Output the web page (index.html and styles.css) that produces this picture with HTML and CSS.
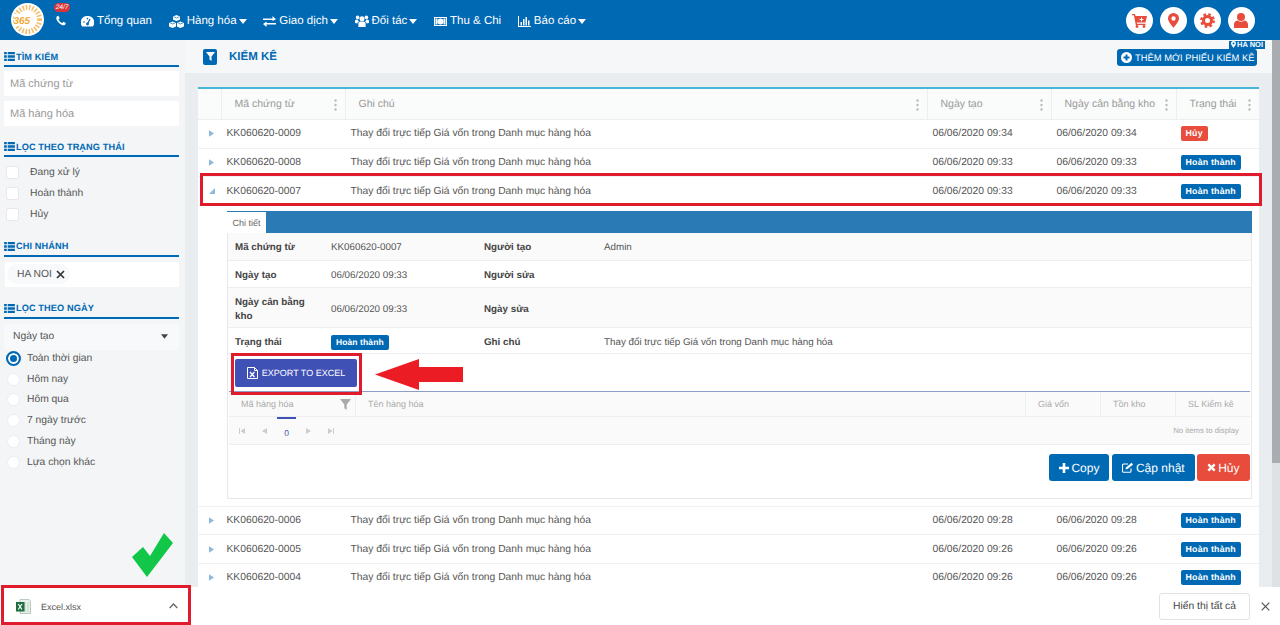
FILE: index.html
```html
<!DOCTYPE html>
<html lang="vi">
<head>
  <meta charset="UTF-8">
  <title>Kiểm kê</title>
  <link rel="stylesheet" href="styles.css">
</head>
<body>

  <svg class="defs" width="0" height="0">
    <symbol id="i-list" viewBox="0 0 12 10"><path d="M0 0h3v2.6H0zM4 0h8v2.6H4zM0 3.7h3v2.6H0zM4 3.7h8v2.6H4zM0 7.4h3V10H0zM4 7.4h8V10H4z"/></symbol>
    <symbol id="i-dots" viewBox="0 0 3 12"><circle cx="1.5" cy="1.5" r="1.2"/><circle cx="1.5" cy="6" r="1.2"/><circle cx="1.5" cy="10.5" r="1.2"/></symbol>
    <symbol id="i-caret" viewBox="0 0 8 5"><path d="M0 0h8L4 5z"/></symbol>
    <symbol id="i-arrow" viewBox="0 0 6 8"><path d="M0 0l6 4-6 4z"/></symbol>
  </svg>

  <header class="topbar">
    <div class="logo">
      <svg width="33" height="33" viewBox="0 0 33 33">
        <circle cx="16.5" cy="16.5" r="16.5" fill="#fff"/>
        <circle cx="16.5" cy="16.5" r="12" fill="none" stroke="#f2b04a" stroke-width="5" stroke-dasharray="1.6 1.6" opacity=".8"/>
        <rect x="3" y="11" width="17" height="12" fill="#fff"/>
        <text x="2.5" y="21" class="logo-text">365</text>
      </svg>
    </div>
    <div class="phone">
      <svg width="12" height="12" viewBox="0 0 1792 1792" fill="#fff"><path d="M1600 1240q0 27-10 70.500t-21 68.500q-21 50-122 106-94 51-186 51-27 0-53-3.500t-57.500-12.500-47-14.500-55.500-20.500-49-18q-98-35-175-83-127-79-264-216t-216-264q-48-77-83-175-3-9-18-49t-20.500-55.500-14.500-47-12.500-57.500-3.500-53q0-92 51-186 56-101 106-122 25-11 68.500-21t70.500-10q14 0 21 3 18 6 53 76 11 19 30 54t35 63.500 31 53.500q3 4 17.500 25t21.500 35.500 7 28.500q0 20-28.500 50t-62 55-62 53-28.500 46q0 9 5 22.500t8.500 20.500 14 24 11.500 19q76 137 174 235t235 174q2 1 19 11.500t24 14 20.500 8.500 22.500 5q18 0 46-28.500t53-62 55-62 50-28.500q14 0 28.500 7t35.500 21.500 25 17.500q25 15 53.500 31t63.500 35 54 30q70 35 76 53 3 7 3 21z"/></svg>
      <span class="badge-247">24/7</span>
    </div>
    <nav class="menu">
      <a class="menu-item">
        <svg width="13" height="11" viewBox="0 0 13 11" fill="#fff"><path d="M6.500 0a6.500 6.500 0 0 0-5.300 10.600h10.600A6.500 6.500 0 0 0 6.500 0z"/><path d="M6.500 8L9 3" stroke="#0069b4" stroke-width="1.300"/><circle cx="6.500" cy="8" r="1.400" fill="#0069b4"/><circle cx="3" cy="6" r=".8" fill="#0069b4"/><circle cx="6.500" cy="2.600" r=".8" fill="#0069b4"/></svg>
        Tổng quan
      </a>
      <a class="menu-item">
        <svg width="15" height="13" viewBox="0 0 15 13" fill="#fff"><path d="M7.500 0l3.400 1.400v3.300L7.500 6.100 4.100 4.700V1.400z"/><path d="M3.700 6.500L7 7.900v3.500L3.700 13 0 11.400V7.900z"/><path d="M11.300 6.500L15 7.900v3.500L11.300 13 8 11.400V7.900z"/><path d="M1.200 8l2.500 1 2.200-1M9.200 8l2.100 1 2.500-1M5.200 2l2.300 1 2.300-1" fill="none" stroke="#0069b4" stroke-width=".7"/></svg>
        Hàng hóa
        <svg class="caret" width="8" height="5"><use href="#i-caret"/></svg>
      </a>
      <a class="menu-item">
        <svg width="13" height="11" viewBox="0 0 13 11" fill="#fff"><path d="M0 2.500h9.500V0L13 3.300 9.500 5V4H0zM13 7H3.500V5.500L0 8l3.500 3V8.500H13z"/></svg>
        Giao dịch
        <svg class="caret" width="8" height="5"><use href="#i-caret"/></svg>
      </a>
      <a class="menu-item">
        <svg width="14" height="12" viewBox="0 0 14 12" fill="#fff"><circle cx="7" cy="3.800" r="2.500"/><circle cx="2.600" cy="2.400" r="1.800"/><circle cx="11.400" cy="2.400" r="1.800"/><path d="M3.400 12V8.500C3.400 7 4.500 6.500 7 6.500s3.600.5 3.600 2V12zM0 8V6c0-1 1-1.500 2.500-1.500.5 1 1 1.500 1.500 2C3 7 2.500 7.500 2.400 8.500zM14 8V6c0-1-1-1.500-2.500-1.500-.5 1-1 1.500-1.500 2 1 .5 1.500 1 1.600 2z"/></svg>
        Đối tác
        <svg class="caret" width="8" height="5"><use href="#i-caret"/></svg>
      </a>
      <a class="menu-item">
        <svg width="13" height="9" viewBox="0 0 13 9"><rect x=".5" y=".5" width="12" height="8" fill="none" stroke="#fff"/><circle cx="6.500" cy="4.500" r="3" fill="#fff"/><rect x="1.500" y="1.500" width="2" height="6" fill="#fff"/><rect x="9.500" y="1.500" width="2" height="6" fill="#fff"/></svg>
        Thu &amp; Chi
      </a>
      <a class="menu-item">
        <svg width="13" height="11" viewBox="0 0 13 11" fill="#fff"><path d="M0 0h1v10h12v1H0zM2.500 6h1.500v3.500H2.500zM5 3h1.500v6.500H5zM7.500 1h1.500v8.500H7.500zM10 4.500h1.500v5H10z"/></svg>
        Báo cáo
        <svg class="caret" width="8" height="5"><use href="#i-caret"/></svg>
      </a>
    </nav>
    <div class="top-actions">
      <span class="round-btn">
        <svg width="15" height="15" viewBox="0 0 15 15"><path d="M0 1h3l.5 2H15l-1.500 6.500H4.800l.2 1.200h8.500v1.300H3.800L1.900 2.300H0z"/><circle cx="5" cy="13.500" r="1.400"/><circle cx="12" cy="13.500" r="1.400"/><path d="M9 4.500v1.500H7.500v1H9v1.500h1V7h1.500V6H10V4.500z" fill="#fff"/></svg>
      </span>
      <span class="round-btn">
        <svg width="11" height="15" viewBox="0 0 11 15"><path fill-rule="evenodd" d="M5.500 0a5.500 5.500 0 0 0-5.500 5.500C0 8.500 3.500 12 5.500 15c2-3 5.500-6.500 5.500-9.500A5.500 5.500 0 0 0 5.500 0zm0 3.300a2.200 2.200 0 1 1 0 4.400 2.200 2.200 0 0 1 0-4.400z"/></svg>
      </span>
      <span class="round-btn">
        <svg width="15" height="15" viewBox="0 0 15 15"><circle cx="7.500" cy="7.500" r="4" fill="none" stroke="#e74c3c" stroke-width="3"/><circle cx="7.500" cy="7.500" r="6.200" fill="none" stroke="#e74c3c" stroke-width="2.400" stroke-dasharray="2.600 2.270"/></svg>
      </span>
      <span class="round-btn">
        <svg width="14" height="15" viewBox="0 0 14 15"><circle cx="7" cy="4" r="4"/><path d="M0 15v-3.500C0 9 2 7.500 3.800 7.500c1 .8 2 1.200 3.200 1.200s2.200-.4 3.200-1.200C12 7.500 14 9 14 11.500V15z"/></svg>
      </span>
    </div>
  </header>

  <div class="page">
    <aside class="sidebar">
      <div class="side-title"><svg width="11" height="9"><use href="#i-list"/></svg>Tìm kiếm</div>
      <div class="side-input">Mã chứng từ</div>
      <div class="side-input next">Mã hàng hóa</div>

      <div class="side-title"><svg width="11" height="9"><use href="#i-list"/></svg>Lọc theo trạng thái</div>
      <div class="checks">
        <label class="check-row"><span class="checkbox"></span>Đang xử lý</label>
        <label class="check-row"><span class="checkbox"></span>Hoàn thành</label>
        <label class="check-row"><span class="checkbox"></span>Hủy</label>
      </div>

      <div class="side-title"><svg width="11" height="9"><use href="#i-list"/></svg>Chi nhánh</div>
      <div class="tag-box">
        <span class="tag">HA NOI
          <svg width="9" height="9" viewBox="0 0 9 9"><path d="M1 1l7 7M8 1L1 8" stroke="#333" stroke-width="1.700"/></svg>
        </span>
      </div>

      <div class="side-title"><svg width="11" height="9"><use href="#i-list"/></svg>Lọc theo ngày</div>
      <div class="side-select">Ngày tạo <svg width="7" height="5"><use href="#i-caret"/></svg></div>
      <div class="radios">
        <label class="radio-row"><span class="radio on"></span>Toàn thời gian</label>
        <label class="radio-row"><span class="radio"></span>Hôm nay</label>
        <label class="radio-row"><span class="radio"></span>Hôm qua</label>
        <label class="radio-row"><span class="radio"></span>7 ngày trước</label>
        <label class="radio-row"><span class="radio"></span>Tháng này</label>
        <label class="radio-row"><span class="radio"></span>Lựa chọn khác</label>
      </div>
    </aside>

    <main class="main">
      <div class="title-bar">
        <span class="filter-box">
          <svg width="9" height="9" viewBox="0 0 9 9" fill="#fff"><path d="M0 0h9L5.500 4.500V9l-2-1.500v-3z"/></svg>
        </span>
        <h1 class="page-title">KIỂM KÊ</h1>
        <div class="title-right">
          <span class="branch-label">
            <svg width="5" height="7" viewBox="0 0 11 15" fill="#fff"><path fill-rule="evenodd" d="M5.500 0a5.500 5.500 0 0 0-5.500 5.500C0 8.500 3.500 12 5.500 15c2-3 5.500-6.500 5.500-9.500A5.500 5.500 0 0 0 5.500 0zm0 3.300a2.200 2.200 0 1 1 0 4.400 2.200 2.200 0 0 1 0-4.400z"/></svg>
            HA NOI
          </span>
          <a class="add-btn">
            <svg width="11" height="11" viewBox="0 0 11 11"><circle cx="5.500" cy="5.500" r="5.500" fill="#fff"/><path d="M4.500 2.500h2v2h2v2h-2v2h-2v-2h-2v-2h2z" fill="#0069b4"/></svg>
            THÊM MỚI PHIẾU KIỂM KÊ
          </a>
        </div>
      </div>

      <div class="content">
        <table class="list">
          <colgroup>
            <col class="c-arrow"><col class="c-code"><col class="c-note"><col class="c-date"><col class="c-date2"><col class="c-status">
          </colgroup>
          <thead>
            <tr>
              <th></th>
              <th><div class="th-in">Mã chứng từ<svg class="dots" width="3" height="12"><use href="#i-dots"/></svg></div></th>
              <th><div class="th-in">Ghi chú<svg class="dots" width="3" height="12"><use href="#i-dots"/></svg></div></th>
              <th><div class="th-in">Ngày tạo<svg class="dots" width="3" height="12"><use href="#i-dots"/></svg></div></th>
              <th><div class="th-in">Ngày cân bằng kho<svg class="dots" width="3" height="12"><use href="#i-dots"/></svg></div></th>
              <th><div class="th-in">Trạng thái<svg class="dots" width="3" height="12"><use href="#i-dots"/></svg></div></th>
            </tr>
          </thead>
          <tbody>
            <tr>
              <td class="arrow"><svg width="5" height="7"><use href="#i-arrow"/></svg></td>
              <td>KK060620-0009</td>
              <td>Thay đổi trực tiếp Giá vốn trong Danh mục hàng hóa</td>
              <td>06/06/2020 09:34</td>
              <td>06/06/2020 09:34</td>
              <td><span class="pill red">Hủy</span></td>
            </tr>
            <tr>
              <td class="arrow"><svg width="5" height="7"><use href="#i-arrow"/></svg></td>
              <td>KK060620-0008</td>
              <td>Thay đổi trực tiếp Giá vốn trong Danh mục hàng hóa</td>
              <td>06/06/2020 09:33</td>
              <td>06/06/2020 09:33</td>
              <td><span class="pill">Hoàn thành</span></td>
            </tr>
            <tr>
              <td class="arrow"><svg width="6" height="6" viewBox="0 0 6 6"><path d="M6 0v6H0z"/></svg></td>
              <td>KK060620-0007</td>
              <td>Thay đổi trực tiếp Giá vốn trong Danh mục hàng hóa</td>
              <td>06/06/2020 09:33</td>
              <td>06/06/2020 09:33</td>
              <td><span class="pill">Hoàn thành</span></td>
            </tr>
            <tr class="detail-row">
              <td colspan="6">
                <div class="detail">
                  <div class="tabs"><span class="tab">Chi tiết</span></div>
                  <table class="info">
                    <colgroup><col class="i-1"><col class="i-2"><col class="i-3"><col></colgroup>
                    <tr class="first">
                      <th>Mã chứng từ</th><td>KK060620-0007</td><th>Người tạo</th><td>Admin</td>
                    </tr>
                    <tr class="plain">
                      <th>Ngày tạo</th><td>06/06/2020 09:33</td><th>Người sửa</th><td></td>
                    </tr>
                    <tr class="tall">
                      <th>Ngày cân bằng kho</th><td>06/06/2020 09:33</td><th>Ngày sửa</th><td></td>
                    </tr>
                    <tr class="plain last">
                      <th>Trạng thái</th><td><span class="pill">Hoàn thành</span></td><th>Ghi chú</th><td>Thay đổi trực tiếp Giá vốn trong Danh mục hàng hóa</td>
                    </tr>
                  </table>
                  <div class="export-row">
                    <a class="export-btn">
                      <svg width="11" height="12" viewBox="0 0 11 12"><path d="M.5.5h7l3 3v8H.5z" fill="none" stroke="#fff"/><path d="M7.500.5v3h3" fill="none" stroke="#fff"/><path d="M3 5l4.500 5M7.500 5L3 10" stroke="#fff" stroke-width="1.300"/></svg>
                      EXPORT TO EXCEL
                    </a>
                  </div>
                  <div class="grid-head">
                    <div class="g-1">Mã hàng hóa
                      <svg width="11" height="11" viewBox="0 0 9 9" fill="#aaa"><path d="M0 0h9L5.500 4.500V9l-2-1.500v-3z"/></svg>
                    </div>
                    <div class="g-2">Tên hàng hóa</div>
                    <div class="g-3">Giá vốn</div>
                    <div class="g-3">Tồn kho</div>
                    <div class="g-3">SL Kiểm kê</div>
                  </div>
                  <div class="pager">
                    <svg width="6" height="6" viewBox="0 0 6 6"><path d="M0 0h1v6H0zM6 0v6L1.500 3z"/></svg>
                    <svg class="p-prev" width="5" height="6" viewBox="0 0 5 6"><path d="M5 0v6L0 3z"/></svg>
                    <span class="p-num">0</span>
                    <svg class="p-next" width="5" height="6" viewBox="0 0 5 6"><path d="M0 0v6l5-3z"/></svg>
                    <svg class="p-last" width="6" height="6" viewBox="0 0 6 6"><path d="M0 0v6l4.500-3zM5 0h1v6H5z"/></svg>
                    <span class="p-info">No items to display</span>
                  </div>
                  <div class="detail-actions">
                    <a class="act-btn">
                      <svg width="10" height="10" viewBox="0 0 10 10" fill="#fff"><path d="M3.700 0h2.600v3.700H10v2.600H6.300V10H3.700V6.300H0V3.700h3.700z"/></svg>
                      Copy
                    </a>
                    <a class="act-btn">
                      <svg width="12" height="11" viewBox="0 0 12 11" fill="none" stroke="#fff"><path d="M9 6.500v2.800a1 1 0 0 1-1 1H1.500a1 1 0 0 1-1-1V3a1 1 0 0 1 1-1H6" stroke-width="1.100"/><path d="M3.500 7.500l.5-2L9.500.7l1.600 1.700L5.500 7z" fill="#fff" stroke="none"/></svg>
                      Cập nhật
                    </a>
                    <a class="act-btn danger">
                      <svg width="9" height="9" viewBox="0 0 9 9"><path d="M1.300 1.300l6.400 6.400M7.700 1.300L1.300 7.700" stroke="#fff" stroke-width="2.400"/></svg>
                      Hủy
                    </a>
                  </div>
                </div>
              </td>
            </tr>
            <tr>
              <td class="arrow"><svg width="5" height="7"><use href="#i-arrow"/></svg></td>
              <td>KK060620-0006</td>
              <td>Thay đổi trực tiếp Giá vốn trong Danh mục hàng hóa</td>
              <td>06/06/2020 09:28</td>
              <td>06/06/2020 09:28</td>
              <td><span class="pill">Hoàn thành</span></td>
            </tr>
            <tr>
              <td class="arrow"><svg width="5" height="7"><use href="#i-arrow"/></svg></td>
              <td>KK060620-0005</td>
              <td>Thay đổi trực tiếp Giá vốn trong Danh mục hàng hóa</td>
              <td>06/06/2020 09:26</td>
              <td>06/06/2020 09:26</td>
              <td><span class="pill">Hoàn thành</span></td>
            </tr>
            <tr>
              <td class="arrow"><svg width="5" height="7"><use href="#i-arrow"/></svg></td>
              <td>KK060620-0004</td>
              <td>Thay đổi trực tiếp Giá vốn trong Danh mục hàng hóa</td>
              <td>06/06/2020 09:26</td>
              <td>06/06/2020 09:26</td>
              <td><span class="pill">Hoàn thành</span></td>
            </tr>
          </tbody>
        </table>
      </div>
    </main>

    <div class="scrollbar"><div class="thumb"></div></div>
  </div>

  <!-- chrome download shelf -->
  <div class="shelf">
    <div class="shelf-file">
      <svg width="15" height="15" viewBox="0 0 15 15"><path d="M4 .5h9l1.500 1.500v12.500H4z" fill="#e8f0ea" stroke="#a9bdb0" stroke-width=".8"/><path d="M9 3v10M12 3v10" stroke="#b9cabd" stroke-width=".8"/><rect y="3" width="8.500" height="9.500" fill="#1d6f42"/><path d="M2.300 5l3.700 5.500M6 5l-3.700 5.500" stroke="#fff" stroke-width="1.200"/></svg>
      <span class="shelf-name">Excel.xlsx</span>
      <svg class="shelf-up" width="9" height="6" viewBox="0 0 9 6"><path d="M.7 5l3.800-4 3.800 4" fill="none" stroke="#666" stroke-width="1.300"/></svg>
    </div>
    <a class="show-all">Hiển thị tất cả</a>
    <svg class="shelf-close" width="9" height="9" viewBox="0 0 9 9"><path d="M.7.7l7.600 7.600M8.300.7L.7 8.300" stroke="#555" stroke-width="1.200"/></svg>
  </div>

  <!-- annotations drawn on top of the screenshot -->
  <div class="mark mark-row"></div>
  <div class="mark mark-export"></div>
  <div class="mark mark-file"></div>
  <svg class="red-arrow" width="89" height="31" viewBox="0 0 89 31"><path d="M0 15.500L44 0v8h44v15H44v8z" fill="#ec1c24"/></svg>
  <svg class="green-check" width="41" height="44" viewBox="0 0 41 44"><path d="M0 24l11-10 7 9L32 0l9 10-26 34z" fill="#12c748"/></svg>

</body>
</html>
```

FILE: styles.css
```css
* { box-sizing: border-box; }
html, body { height: 100%; }
body {
  margin: 0;
  font-family: "Liberation Sans", Arial, sans-serif;
  color: #555;
  overflow: hidden;
  position: relative;
  background: #e9edf0;
  text-rendering: geometricPrecision;
}
.defs { position: absolute; }

/* top bar */
.topbar {
  height: 40px;
  background: #0069b4;
  display: flex;
  align-items: center;
  padding: 0 25.500px 0 11px;
  color: #fff;
}
.logo { width: 33px; height: 33px; margin-top: -1px; }
.logo-text { font-size: 10px; font-weight: bold; font-style: italic; fill: #f0a830; }
.phone { position: relative; margin-left: 11px; width: 12px; height: 12px; margin-top: 2px; }
.phone svg { display: block; }
.badge-247 {
  position: absolute;
  left: -1px;
  top: -12px;
  width: 16px;
  height: 9px;
  line-height: 9px;
  font-size: 6.5px;
  font-style: italic;
  text-align: center;
  background: #d9363a;
  border-radius: 5px;
}
.menu { display: flex; align-items: center; margin: 2px 0 0 14px; gap: 16.700px; }
.menu-item {
  display: flex;
  align-items: center;
  gap: 3px;
  font-size: 11.500px;
  color: #fff;
  white-space: nowrap;
}
.menu-item svg { fill: #fff; }
.caret { margin-left: -1px; }
.top-actions { margin-left: auto; display: flex; gap: 6.700px; }
.round-btn {
  width: 27px;
  height: 27px;
  border-radius: 50%;
  background: #fff;
  display: flex;
  align-items: center;
  justify-content: center;
}
.round-btn svg { fill: #e74c3c; }

/* page */
.page { display: flex; height: 585px; }

.sidebar {
  width: 185px;
  flex: none;
  background: #f3f5f7;
  padding: 10px 6px 0 4px;
  font-size: 10.3px;
}
.side-title {
  display: flex;
  align-items: center;
  gap: 1px;
  height: 17px;
  margin-top: 14px;
  padding-bottom: 2px;
  border-bottom: 2px solid #0069b4;
  color: #0069b4;
  font-size: 9.200px;
  font-weight: bold;
  text-transform: uppercase;
  letter-spacing: .1px;
}
.side-title:first-child { margin-top: 0; }
.side-title svg { fill: #0069b4; }
.side-input {
  height: 25px;
  margin-top: 4px;
  line-height: 26px;
  padding-left: 6px;
  background: #fff;
  color: #999;
  font-size: 11px;
}
.side-input.next { margin-top: 5px; }
.checks { padding: 4.500px 0 .5px; }
.check-row {
  display: flex;
  align-items: center;
  height: 21.3px;
  padding-left: 2px;
  color: #555;
}
.checkbox {
  width: 13px;
  height: 13px;
  margin-right: 11px;
  background: #fff;
  border: 1px solid #e6e8ea;
  border-radius: 2px;
}
.tag-box {
  height: 25px;
  margin: 5px 0 0 1px;
  background: #fff;
  display: flex;
  align-items: center;
  padding-left: 2px;
}
.tag-box + .side-title { margin-top: 15px; }
.tag {
  display: flex;
  align-items: center;
  gap: 4px;
  height: 20px;
  padding: 0 5px 0 10px;
  background: #f8f9fa;
  border-radius: 10px;
  font-size: 10.3px;
}
.side-select {
  height: 26px;
  margin-top: 5px;
  padding: 0 11px 0 9px;
  background: #f8f9fa;
  border-radius: 3px;
  display: flex;
  align-items: center;
  justify-content: space-between;
  font-size: 10.3px;
}
.side-select svg { fill: #444; }
.radios { margin-top: -2px; }
.radio-row {
  display: flex;
  align-items: center;
  height: 20.8px;
  padding-left: 3px;
  color: #555;
}
.radio {
  width: 13px;
  height: 13px;
  margin-right: 7px;
  background: #fff;
  border: 1px solid #ebedef;
  border-radius: 50%;
}
.radio.on {
  width: 15px;
  height: 15px;
  margin: 0 6px 0 -1px;
  background: #0069b4;
  border: 2px solid #0069b4;
  box-shadow: inset 0 0 0 2px #fff;
}

.main { width: 1087px; flex: none; }
.title-bar {
  height: 33px;
  background: #f5f7f9;
  display: flex;
  align-items: center;
  padding-left: 18px;
}
.filter-box {
  width: 14px;
  height: 16px;
  background: #0069b4;
  border-radius: 2px;
  display: flex;
  align-items: center;
  justify-content: center;
}
.page-title {
  margin: 1px 0 0 12px;
  font-size: 11.500px;
  color: #0069b4;
  font-weight: bold;
}
.title-right { margin: 1px 15px 0 auto; position: relative; }
.branch-label {
  position: absolute;
  right: -8px;
  top: -8px;
  height: 8px;
  padding: 0 2px;
  background: #0069b4;
  color: #fff;
  font-size: 7.500px;
  font-weight: bold;
  line-height: 8px;
  display: flex;
  align-items: center;
  gap: 1px;
}
.add-btn {
  display: flex;
  align-items: center;
  gap: 3px;
  width: 140px;
  height: 17px;
  padding-left: 4px;
  background: #0069b4;
  border-radius: 3px;
  color: #fff;
  font-size: 9.400px;
  white-space: nowrap;
}

.content { padding: 14px 13px 0 13px; }

/* list */
.list {
  width: 1061px;
  table-layout: fixed;
  border-collapse: collapse;
  background: #fff;
  font-size: 10.300px;
  color: #555;
}
.c-arrow { width: 23px; }
.c-code { width: 124px; }
.c-note { width: 582px; }
.c-date { width: 124px; }
.c-date2 { width: 125px; }
.c-status { width: 83px; }
.list > thead th {
  height: 31.500px;
  border-top: 2px solid #45b6d8;
  border-bottom: 1px solid #eceef0;
  background: #fafbfb;
  font-weight: normal;
  color: #999;
  text-align: left;
  padding: 0;
}
.list > thead th + th { border-left: 1px solid #eceef0; }
.th-in {
  display: flex;
  align-items: center;
  justify-content: space-between;
  margin-top: -1px;
  padding: 0 8px 0 13px;
  font-size: 10.500px;
}
.dots { fill: #bbb; margin-top: 2px; }
.list > tbody > tr > td {
  height: 28.700px;
  padding: 0 0 0 5.500px;
  border-bottom: 1px solid #f0f1f3;
}
.list > tbody > tr > td.arrow { padding: 0 0 0 11px; }
.arrow svg { fill: #8db9dc; display: block; }
.pill {
  display: inline-block;
  margin-left: -1px;
  height: 15px;
  line-height: 15px;
  padding: 0 5px;
  background: #0069b4;
  color: #fff;
  font-size: 8.800px;
  font-weight: bold;
  border-radius: 2px;
  letter-spacing: .2px;
}
.pill.red { background: #e74c3c; }

/* expanded row */
.list > tbody > .detail-row > td { height: auto; padding: 4.500px 7px 7px 29px; }
.detail {
  border: 1px solid #e6e8ea;
  border-top: 0;
  height: 288px;
}
.tabs { height: 22px; margin: 0 -1px; background: #2a7ab5; }
.tab {
  display: inline-block;
  width: 39px;
  height: 22px;
  line-height: 23px;
  background: #fff;
  border-top: 1px solid #2a7ab5;
  text-align: center;
  font-size: 9px;
  color: #666;
}
.info {
  width: 100%;
  table-layout: fixed;
  border-collapse: collapse;
  font-size: 9.800px;
}
.i-1 { width: 96px; }
.i-2 { width: 153px; }
.i-3 { width: 120px; }
.info tr { height: 27px; background: #fafafa; }
.info .first { height: 28px; }
.info .last { height: 26px; }
.info .tall { height: 40px; }
.info .plain { background: #fff; }
.info th, .info td {
  padding: 4px 7px 0;
  border-bottom: 1px solid #eceef0;
  text-align: left;
  line-height: 14px;
}
.info th { color: #444; font-weight: bold; }
.info td { color: #555; }
.info .pill { margin-left: 0; font-size: 8.500px; letter-spacing: .1px; }
.export-row { height: 37px; padding: 5px 0 0 7px; }
.export-btn {
  display: flex;
  align-items: center;
  justify-content: center;
  gap: 4px;
  width: 122px;
  height: 28px;
  background: #3f51b5;
  border-radius: 2px;
  color: #fff;
  font-size: 9px;
}
.grid-head {
  display: flex;
  height: 26px;
  margin: 0 1px;
  border-top: 1px solid #8f9bc9;
  border-bottom: 1px solid #eceef0;
  background: #fafafa;
  color: #aaa;
  font-size: 9px;
  line-height: 22px;
}
.grid-head > div { border-left: 1px solid #eceef0; }
.g-1 {
  width: 126px;
  padding-left: 12px;
  display: flex;
  justify-content: space-between;
  padding-right: 4px;
  align-items: center;
  border-left: 0 !important;
}
.g-2 { flex: 1; padding-left: 12px; line-height: 24px; }
.g-3 { width: 75px; padding-left: 12px; line-height: 24px; }
.pager {
  display: flex;
  align-items: center;
  height: 28px;
  margin: 0 1px;
  padding-left: 10px;
  background: #fafafa;
  border-bottom: 1px solid #eceef0;
  font-size: 8.500px;
  color: #aaa;
}
.pager svg { fill: #ccc; }
.p-prev { margin-left: 17px; }
.p-num {
  width: 19px;
  margin-left: 10px;
  height: 28px;
  line-height: 28px;
  border-top: 2px solid #3f51b5;
  text-align: center;
  color: #3f51b5;
}
.p-next { margin-left: 10px; }
.p-last { margin-left: 17px; }
.p-info { margin-left: auto; padding-right: 11px; font-size: 7.800px; }
.detail-actions {
  display: flex;
  justify-content: flex-end;
  gap: 2.500px;
  padding: 9px 1px 0 0;
}
.act-btn {
  display: flex;
  align-items: center;
  justify-content: center;
  gap: 2px;
  height: 27px;
  padding: 0 10px;
  background: #0069b4;
  border-radius: 3px;
  color: #fff;
  font-size: 12px;
}
.act-btn.danger { background: #e74c3c; padding-right: 10.500px; }

.scrollbar { width: 8px; flex: none; background: #dfe2e5; }
.thumb { height: 423px; background: #a9adb1; }

/* download shelf */
.shelf {
  position: absolute;
  left: 0;
  right: 0;
  top: 587px;
  height: 38px;
  background: #fff;
  display: flex;
  align-items: center;
}
.shelf-file {
  width: 189px;
  display: flex;
  align-items: center;
  padding-left: 16px;
}
.shelf-name { margin: 1px 0 0 10px; font-size: 9px; color: #555; }
.shelf-up { margin-left: auto; margin-right: 11px; }
.show-all {
  margin-left: auto;
  margin-right: 11px;
  width: 91px;
  height: 27px;
  line-height: 25px;
  border: 1px solid #e2e2e2;
  border-radius: 3px;
  text-align: center;
  font-size: 10.300px;
  color: #444;
}
.shelf-close { margin-right: 10px; }

/* annotations */
.mark { position: absolute; border: 3px solid #e01b2b; }
.mark-row { left: 200px; top: 173px; width: 1062px; height: 33px; }
.mark-export { left: 231px; top: 353px; width: 131px; height: 42px; }
.mark-file { left: 1px; top: 585px; width: 190px; height: 40px; }
.red-arrow { position: absolute; left: 375px; top: 359px; }
.green-check { position: absolute; left: 132px; top: 533px; }
```
